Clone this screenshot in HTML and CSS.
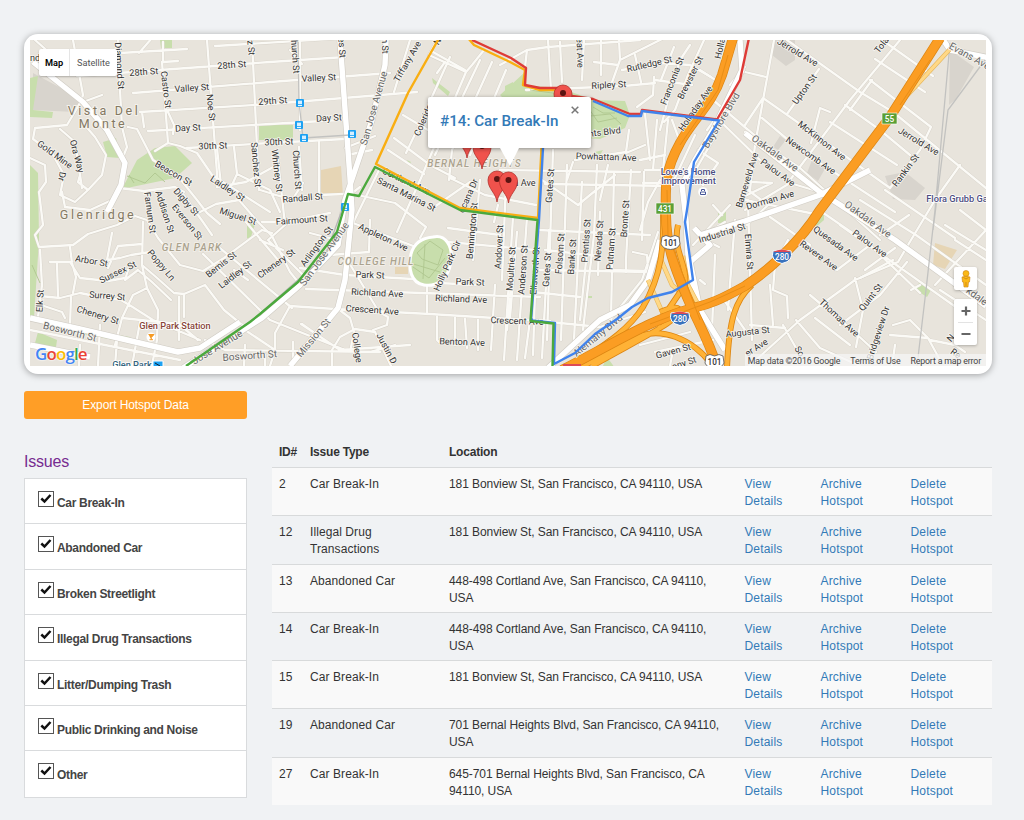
FILE: index.html
```html
<!DOCTYPE html>
<html lang="en">
<head>
<meta charset="utf-8">
<title>Hotspots</title>
<link rel="stylesheet" href="styles.css">
</head>
<body>
<main class="page">
<section class="map-card">
<div class="map">
<svg class="map-art" viewBox="30 40 956 326" width="956" height="326">
<defs>
<g id="pin"><path d="M0 0C-1-9-9-13-9-22A9 9 0 0 1 9-22C9-13 1-9 0 0Z" fill="#f0524c" stroke="#b3302b" stroke-width=".8"/><circle cy="-23" r="3" fill="#5c1412"/></g>
<g id="stop"><rect x="-4" y="-4" width="8" height="8" rx="1" fill="#1da1f2"/><rect x="-2" y="-2.4" width="4" height="3.6" fill="#d8efff"/><path d="M-2 2.6H2" stroke="#fff"/></g>
<g id="streets" fill="none" stroke-linejoin="round" stroke-linecap="round">
<path d="M120 53L187 49M77 76L270 62 345 57M215 46L345 38M133 93L270 82 390 73M140 112L270 104 417 92M148 131L270 124 340 120M187 148L270 143 345 139M207 40L218 187M252 40L259 190M118 40L120 90 122 127 127 147 123 157M162 62L168 143 180 146 197 153 212 175 270 212M168 112L174 125 173 134M168 143L155 151M142 112L144 127M163 42L163 62 178 61M139 53L152 38M128 127L137 129 153 160 177 175 197 200 207 213 220 224"/>
<path d="M73 40L83 95 80 103 67 125 35 128 33 139 52 153 64 175 60 195 75 202 88 190 78 182 80 175M60 129L75 142 82 188M83 102L102 95M82 122L95 137 106 155 102 175 88 190M62 192L65 207 90 210 112 200 119 188 144 191 175 187 184 192M30 158L45 165 46 182 39 192 43 225 35 235 39 247 73 245 88 234 117 225 135 216 147 220 158 238 180 265 203 271 224 258 262 230 272 233"/>
<path d="M35 40L60 62M143 222L142 265 147 288 158 310 158 318M112 233L107 260 120 258 131 255 150 252M142 244L118 246 108 268M128 270L125 280 138 270 152 282 171 300M142 265L156 277 174 293 184 294 184 317 M184 294L205 285 224 310 246 328M147 288L133 295 122 318 115 345M147 288L158 310 157 340 152 365M70 247L72 263 76 277 73 293M50 262L70 262 80 278 108 281 125 278M40 250L42 285 38 317M57 264L58 296M40 296L60 298 80 293 95 296 121 300 131 306 153 320 200 340M71 297L70 325M41 305L62 312 65 318M30 330L180 360M80 345L79 366M100 325L98 366M117 340L115 366M122 318L179 324 198 340M179 297L179 340M140 322L132 366"/>
<path d="M180 190L203 222 212 235M200 212L216 204 239 200 258 222 272 236 290 272 298 282M217 148L221 185M234 147L237 174 270 190 280 212M237 174L232 185M217 187L246 182 275 166M260 190L292 200 303 183M299 147L302 190M319 142L319 195 345 194M277 150L285 225 268 240 302 274M260 240L283 250M203 254L270 320M215 244L292 308M246 222L278 260M234 270L248 280M262 222L285 222 330 213M310 233L337 240"/>
<path d="M300 40L300 130M290 50L302 64M345 148L375 136M347 155L372 150M410 40L394 92M433 52L465 70M445 62L437 73M437 40L429 55 466 72 472 65 484 50M403 115L448 142M394 138L430 165 455 178M388 150L424 174M450 57L417 130 406 153M466 72L421 178 397 232M480 60L435 155M492 62L452 150 449 180M506 70L470 155M360 187L343 200M362 196L395 203 426 227 420 238M470 182L430 210M379 170L353 223 450 260M370 220L369 252 330 255M450 178L485 195 536 205M480 180L473 260M506 182L502 280M498 205L494 222M448 228L500 235M448 242L535 250"/>
<path d="M300 268L345 275 430 280M306 289L540 297M290 306L335 309 430 314 495 318 550 321M351 266L379 312 388 317 387 325 373 330M337 308L350 318 354 332 350 352 370 352 395 345M332 366L332 350 340 337 355 329 375 332 391 366M290 306L275 333 275 350M301 324L340 350 410 345M302 324L316 334 M427 284L427 312M437 317L437 340 440 343M455 318L455 345M465 319L467 348M478 320L478 350M495 285L491 350M511 285L507 330M530 320L525 358M517 232L510 318M450 257L440 283 475 285M270 320L345 350M245 330L275 350 270 366M205 340L225 350 380 352M245 345L244 366M265 355L265 366M293 342L293 366"/>
<path d="M500 65L527 50 548 47 640 40M527 50L525 67M548 40L551 90M560 42L562 82M584 40L582 80M601 40L601 75M594 62L618 65M619 40L620 60 610 88M526 90L624 86 655 83M620 60L670 35M622 70L660 63 690 65 711 77M635 55L641 82M654 77L653 95 637 107M655 80L692 85M674 47L661 80M690 45L680 60 668 100 660 130M704 40L688 75 675 110 664 122M645 114L650 160M668 120L663 170 645 170M657 120L653 170M500 170L640 172 M575 160L626 152 629 130M608 165L600 200M626 153L645 145M545 184L670 186M538 230L650 235M545 250L598 256M540 270L650 272M533 292L580 297M540 321L600 327 645 312"/>
<path d="M553 150L547 340M567 165L561 340M582 182L574 340M597 165L594 235 583 330M614 173L611 320M631 170L626 260M644 172L642 240M660 180L648 202 640 230M513 217L504 360M527 217L517 360M542 180L578 205 590 195 615 175M537 232L533 355M549 230L542 358M633 252L647 255 648 270M658 232L642 280 610 320M589 232L580 320M600 212L598 275M611 270L646 271M626 260L626 272M573 162L567 180M640 160L665 155M643 183L662 183M680 142L672 120M695 135L660 210M698 150L718 163 703 185M730 110L690 180M713 100L760 140M700 70L717 81M719 120L760 160M730 85L745 67M713 122L707 130"/>
<path d="M774 40L763 100 755 145 750 190M745 72L766 77M787 40L860 92 893 112 915 130 986 188M819 69L787 114M745 125L763 98 820 138 890 188M762 118L800 150 895 212M745 132L800 168 880 240M900 40L850 100 820 140 790 180M875 59L925 92M885 42L933 76M872 80L850 110M870 80L931 127 920 150 890 188M845 105L880 130 910 155M830 122L897 165M811 143L820 108 830 112M752 182L772 183 745 196M745 200L820 215M745 210L790 183 830 195M748 190L768 205 747 225M770 217L810 245M840 225L960 310M860 200L916 235 986 285M885 190L955 238M822 212L870 245 920 293M870 245L837 270M907 262L880 295M893 260L860 278M909 215L880 235M895 248L865 270"/>
<path d="M745 370L800 320 855 280 898 262 908 245 935 200 960 165M750 325L785 328M788 240L775 265 773 290 787 296 788 318M770 285L773 325M810 295L852 330 876 352M796 320L820 348 860 366M783 325L800 355M855 278L863 310 856 347M880 295L840 325M815 318L850 345M893 325L910 320 930 340 955 345 965 352M895 345L892 366M890 335L928 338 940 360M940 290L986 320M955 240L986 260M935 285L986 230M945 225L986 250M960 210L986 230M911 290L920 285"/>
<path d="M713 205L722 215M705 240L719 247M715 255L712 330M735 220L728 310M748 200L752 340M700 280L705 284M693 245L730 205M620 340L606 352 586 366M640 345L690 332M655 352L713 340M672 355L670 366M700 330L720 365M724 300L745 330M712 230L725 222"/>
</g>
<g id="arterials" fill="none" stroke-linejoin="round">
<path d="M33 62L83 102 107 130 125 163 121 185 107 212M340 40L350 178 352 210 345 280 338 308 290 366M386 40L385 65 372 120 345 200 338 245 300 285 262 318 183 368M30 318L80 329 178 352 200 348 240 322M345 210L350 195M30 345L90 357"/>
<path d="M740 40L742 70 713 130 695 160 682 185 686 220 690 290M548 368L600 320 630 305 648 280 660 240M745 133L820 192 895 240 986 306M700 235L745 221 820 195 870 170M694 228L710 245 690 262 700 310 725 350M990 58L950 50 942 38"/>
</g>
<clipPath id="frame"><rect x="30" y="40" width="956" height="326"/></clipPath>
</defs>
<g clip-path="url(#frame)">
<rect x="30" y="40" width="956" height="326" fill="#e8e4dc"/>
<path d="M33 73L83 100 75 112 33 110ZM885 176L905 172 925 188 915 200 893 199ZM950 50L974 67 956 99 949 105ZM780 136L786 140 778 150 773 147ZM812 160L826 167 818 181 807 173ZM775 40H795V60L786 66 772 55Z" fill="#d8d4cd"/>
<g fill="#c8deac"><path d="M30 78L38 76 33 110 53 112 52 118 30 117ZM30 165L38 173 39 240 34 318H30ZM103 142L116 138 120 158 107 157ZM137 160L155 148 175 146 192 163 175 178 122 189ZM160 40H172V48H161ZM259 125H293V140H259ZM38 332L57 340 55 354 35 343ZM67 326L130 337 134 344 68 331ZM525 72L523 85 560 88 594 100 625 101 630 115 625 128 600 139 540 135 500 95ZM432 78L450 92 448 96 433 83ZM505 86L513 82V104H505ZM718 212H726V223H718ZM817 220L824 213V220L816 227ZM919 283L931 290 927 297 916 290ZM585 296H592V298H585ZM607 357L615 368H602ZM595 152L603 150 600 155ZM247 222L255 224 250 240 247 238ZM230 330L240 322 240 326ZM407 160L411 162 409 165Z"/></g>
<path d="M321 170L341 166 343 196H321ZM395 267H408V274H395ZM935 243L957 250 945 269 933 265Z" fill="#e6d5b5"/>
<use href="#streets" stroke="#d6d1c8" stroke-width="3.1"/><use href="#streets" stroke="#fbfaf6" stroke-width="2.3"/>
<use href="#arterials" stroke="#d0ccc4" stroke-width="6.6"/><use href="#arterials" stroke="#fff" stroke-width="5.4"/>
<path d="M433 237C445 234 453 245 451 262 448 280 436 287 424 285 411 283 408 269 411 254 414 243 421 238 433 237Z" fill="#c8deac" stroke="#fff" stroke-width="3"/>
<path d="M417 253L430 241 443 250 438 265 422 259ZM413 267L429 278 445 258M425 244L423 279M410 263L440 272M127 176L145 183 155 173 165 182M134 183L129 175M590 116L610 114 621 124M593 107L603 113 615 113M585 103L598 122 617 118M32 265L40 283M530 90L560 94 575 105" fill="none" stroke="#afc68f" stroke-width=".9"/>
<g fill="none" stroke="#c2c2c0" stroke-width="1.300"><path d="M298 40L299 102 303 138 350 135M950 43L935 210 926 290 917 366M985 60L948 110 933 230"/><path d="M342 210L325 256 255 318 190 362" stroke="#b5b5b5"/></g>
<g fill="none" stroke-linejoin="round">
<path d="M951 48L903 100M661 260L672 285 690 300M683 256L688 285 697 302M648 280L668 325" stroke="#e5b65e" stroke-width="4.5"/><path d="M951 48L903 100M661 260L672 285 690 300M683 256L688 285 697 302M648 280L668 325" stroke="#ffd886" stroke-width="3.3"/>
<g stroke="#dd8613" stroke-width="6"><path id="ramps" d="M663 213C664 245 662 275 643 307 625 335 595 350 573 366M578 368C600 360 625 340 643 335 660 330 690 335 713 366M592 366C620 350 640 340 660 328S690 300 660 312M678 225C672 250 688 265 685 285L657 326M752 285C735 300 729 320 727 368"/></g>
<use href="#ramps" stroke="#ffb236" stroke-width="4.3"/>
<path d="M733 38L722 75C712 105 692 120 680 143 665 170 665 185 666 215 666 250 678 275 687 297 698 323 709 340 718 370M940 38L890 117 820 210C797 247 762 275 745 286 720 300 710 304 693 308 650 320 620 340 562 370" stroke="#dd8613" stroke-width="10"/>
<path d="M733 38L722 75C712 105 692 120 680 143 665 170 665 185 666 215 666 250 678 275 687 297 698 323 709 340 718 370M940 38L890 117 820 210C797 247 762 275 745 286 720 300 710 304 693 308 650 320 620 340 562 370" stroke="#fb9d23" stroke-width="8.6"/>
<path d="M728 55L718 90 680 145M667 190L668 235 700 320M930 60L900 105M745 286L710 302 650 324" stroke="#e88e16"/>
</g>
<g class="street">
<text transform="translate(35 61)">nd</text><text transform="translate(116.500 66)rotate(86)">Diamond St</text><text transform="translate(144 75)rotate(-4)">28th St</text><text transform="translate(232 68)rotate(-4)">28th St</text><text transform="translate(163 90)rotate(83)">Castro St</text><text transform="translate(192 91)rotate(-4)">Valley St</text><text transform="translate(208 108)rotate(84)">Noe St</text><text transform="translate(188 131)rotate(-3)">Day St</text><text transform="translate(213 149)rotate(-2)">30th St</text><text transform="translate(253 165)rotate(85)">Sanchez St</text><text transform="translate(248 48)rotate(85)">z St</text><text transform="translate(226 191)rotate(33)">Laidley St</text><text transform="translate(172 176)rotate(30)">Beacon St</text><text transform="translate(53 157)rotate(36)">Gold Mine</text><text transform="translate(59 176)rotate(100)">Dr</text><text transform="translate(74 157)rotate(75)">Ora Way</text><text transform="translate(147 213)rotate(82)">Farnum St</text><text transform="translate(162 213)rotate(72)">Addison St</text><text transform="translate(184 204)rotate(49)">Digby St</text><text transform="translate(185 224)rotate(51)">Everson St</text><text transform="translate(237 219)rotate(18)">Miguel St</text><text transform="translate(91 264)rotate(10)">Arbor St</text><text transform="translate(119 275)rotate(-26)">Sussex St</text><text transform="translate(159 267)rotate(50)">Poppy Ln</text><text transform="translate(107 299)rotate(5)">Surrey St</text><text transform="translate(97 318)rotate(17)">Chenery St</text><text transform="translate(43 301)rotate(-87)">Elk St</text><text transform="translate(223 267)rotate(-38)">Bemis St</text><text transform="translate(237 277)rotate(-38)">Laidley St</text><text transform="translate(278 266)rotate(-36)">Chenery St</text>
<text transform="translate(292 54)rotate(86)">Church St</text><text transform="translate(339 48)rotate(86)">es St</text><text transform="translate(382 46)rotate(88)">n St</text><text transform="translate(319 81)rotate(-3)">Valley St</text><text transform="translate(273 104)rotate(-4)">29th St</text><text transform="translate(329 121)rotate(-3)">Day St</text><text transform="translate(279 145)rotate(-2)">30th St</text><text transform="translate(274 171)rotate(83)">Whitney St</text><text transform="translate(294 170)rotate(86)">Church St</text><text transform="translate(303 201)rotate(-5)">Randall St</text><text transform="translate(302 223)rotate(-4)">Fairmount St</text><text transform="translate(319 248)rotate(-53)">Arlington St</text><text transform="translate(410 63)rotate(-60)">Tiffany Ave</text><text transform="translate(427 119)rotate(-67)">Coleridge</text><text transform="translate(405 197)rotate(27)">Santa Marina St</text><text transform="translate(405 184)rotate(25)">Cortland Ave</text><text transform="translate(382 240)rotate(25)">Appleton Ave</text><text transform="translate(370 278)rotate(2)">Park St</text><text transform="translate(470 285)rotate(2)">Park St</text><text transform="translate(377 296)rotate(3)">Richland Ave</text><text transform="translate(461 302)rotate(2)">Richland Ave</text><text transform="translate(372 313)rotate(4)">Crescent Ave</text><text transform="translate(517 324)rotate(2)">Crescent Ave</text><text transform="translate(462 345)rotate(2)">Benton Ave</text><text transform="translate(354 348)rotate(82)">College</text><text transform="translate(384 350)rotate(62)">Justin D</text><text transform="translate(450 267)rotate(-66)">Holly Park Cir</text><text transform="translate(475 231)rotate(-85)">Bennington St</text><text transform="translate(471 197)rotate(-66)">ocana Dr</text><text transform="translate(440 43)rotate(-60)">N</text>
<text transform="translate(502 247)rotate(-87)">Andover St</text><text transform="translate(514 269)rotate(-86)">Moultrie St</text><text transform="translate(526 270)rotate(-86)">Anderson St</text><text transform="translate(538 271)rotate(-86)">Ellsworth St</text><text transform="translate(550 270)rotate(-86)">Gates St</text><text transform="translate(563 254)rotate(-86)">Folsom St</text><text transform="translate(575 257)rotate(-86)">Banks St</text><text transform="translate(589 241)rotate(-86)">Prentiss St</text><text transform="translate(602 241)rotate(-86)">Nevada St</text><text transform="translate(614 249)rotate(-86)">Putnam St</text><text transform="translate(628 219)rotate(-86)">Bronte St</text><text transform="translate(553 186)rotate(-86)">Gates St</text><text transform="translate(629 207)rotate(-86)"></text><text transform="translate(522 186)">na Ave</text><text transform="translate(577 53)rotate(88)">eat Ave</text><text transform="translate(650 67)rotate(-13)">Rutledge St</text><text transform="translate(609 88)rotate(-3)">Ripley St</text><text transform="translate(675 82)rotate(-69)">Franconia St</text><text transform="translate(693 79)rotate(-64)">Brewster St</text><text transform="translate(723 49)rotate(-78)">Holla</text><text transform="translate(698 110)rotate(-55)">Holladay Ave</text><text transform="translate(605 135)rotate(-7)">nts Blvd</text><text transform="translate(606 160)rotate(2)">Powhattan Ave</text><text transform="translate(750 181)rotate(-73)">Barneveld Ave</text><text transform="translate(723 236)rotate(-17)">Industrial St</text><text transform="translate(746 252)rotate(86)">Elmira St</text><text transform="translate(674 354)rotate(-15)">Gaven St</text><text transform="translate(685 366)rotate(-18)">ony St</text><text transform="translate(748 335)rotate(-6)">Augusta St</text>
<text transform="translate(796 55)rotate(31)">Jerrold Ave</text><text transform="translate(807 91)rotate(-54)">Upton St</text><text transform="translate(884 47)rotate(-52)">Tola</text><text transform="translate(820 143)rotate(38)">McKinnon Ave</text><text transform="translate(809 158)rotate(35)">Newcomb Ave</text><text transform="translate(776 175)rotate(36)">Palou Ave</text><text transform="translate(771 203)rotate(-16)">Dorman Ave</text><text transform="translate(917 144)rotate(31)">Jerrold Ave</text><text transform="translate(908 172)rotate(-53)">Rankin St</text><text transform="translate(834 246)rotate(36)">Quesada Ave</text><text transform="translate(817 258)rotate(36)">Revere Ave</text><text transform="translate(868 246)rotate(36)">Palou Ave</text><text transform="translate(837 320)rotate(43)">Thomas Ave</text><text transform="translate(873 299)rotate(-52)">Quint St</text><text transform="translate(881 334)rotate(-72)">Bridgeview Dr</text><text transform="translate(758 350)rotate(-32)">er Ave</text><text transform="translate(797 353)rotate(60)">So</text><text transform="translate(953 340)rotate(-50)">N</text><text transform="translate(954 356)rotate(35)">Re</text>
</g>
<g class="street road">
<text transform="translate(377 109)rotate(-74)">San Jose Avenue</text><text transform="translate(327 256)rotate(-54)">San Jose Avenue</text><text transform="translate(219 350)rotate(-31)">Jose Avenue</text><text transform="translate(69 335)rotate(14)">Bosworth St</text><text transform="translate(250 359)rotate(-4)">Bosworth St</text><text transform="translate(316 340)rotate(-50)">Mission St</text><text transform="translate(724 122)rotate(-59)">Bayshore Blvd</text><text transform="translate(600 338)rotate(-39)">Alemany Blvd</text><text transform="translate(773 156)rotate(36)">Oakdale Ave</text><text transform="translate(866 222)rotate(36)">Oakdale Ave</text><text transform="translate(968 59)rotate(29)">Evans Ave</text><text transform="translate(975 299)rotate(36)">kdale</text>
</g>
<g class="area"><text x="104" y="115">Vista Del</text><text x="103" y="128">Monte</text><text x="98" y="219">Glenridge</text></g>
<g class="district"><text x="192" y="251">GLEN PARK</text><text x="376" y="265">COLLEGE HILL</text><text x="474.500" y="167">BERNAL HEIGHTS</text></g>
<text class="poi brown" x="175" y="329">Glen Park Station</text><circle cx="151" cy="337" r="4.500" fill="#fff"/><path d="M148.500 334.500H154L151.300 337.500V339.500M149.500 339.700H153" stroke="#f59a23" fill="#f59a23"/>
<text class="poi" x="132" y="368">Glen Park</text><path d="M153 361H163V368H153Z" fill="#1da1f2" stroke="#fff"/><path d="M155 363L160 366" stroke="#123"/>
<text class="poi purple" x="688" y="174.500">Lowe's Home</text><text class="poi purple" x="688.500" y="184">Improvement</text><circle cx="703" cy="192" r="4.800" fill="#fff"/><path d="M700.500 192V194.500H705.500V192ZM701.500 191V189.500H704.500V191" fill="none" stroke="#475798"/>
<text class="poi purple" x="957" y="202">Flora Grubb Ga</text>
<use href="#stop" x="300" y="103"/><use href="#stop" x="299" y="125"/><use href="#stop" x="304" y="138"/><use href="#stop" x="352" y="134"/><use href="#stop" x="345" y="207"/>
<g><path d="M656 203H674V214H656ZM882 113H897V124H882Z" fill="#5b9f35" stroke="#fff" stroke-width=".6"/><text class="shield light" x="665" y="211.500">431</text><text class="shield light" x="889.500" y="121.500">55</text>
<path id="us" d="M662 237L666 235.500 670.500 237 675 235.500 679 237 680 244Q678 249 670.500 249.500 663 249 661 244Z" fill="#fff" stroke="#555" stroke-width=".8"/><use href="#us" x="44" y="119"/><text class="shield" x="670.500" y="246">101</text><text class="shield" x="714.500" y="365">101</text>
<path id="inter" d="M671 313Q680 311 689 313 692 323 680 325.500 668 323 671 313Z" fill="#3972bd" stroke="#fff"/><path id="intertop" d="M671 314Q680 309 689 314Z" fill="#dd4a55"/><use href="#inter" x="102" y="-62"/><use href="#intertop" x="102" y="-62"/><text class="shield light" x="680" y="321.500">280</text><text class="shield light" x="782" y="259.500">280</text><path d="M563 364H581V368H563Z" fill="#dd4a55"/></g>
<g fill="none" stroke-width="2.400" stroke-linejoin="round">
<path d="M438 40L408 93 376 164 460 208 538 218 541.500 148M468 38L474 45 510 62 525 70 523 85 540 90 560 90" stroke="#f9ae12"/>
<path d="M472 40L511 58 526 68 525 85 540 88 562 88M572 96L593 99 630 114 641 114 642 110 717 119.500 740 80 749 38" stroke="#de3b37"/>
<path d="M593 101L628 116 641 116 642 111 719 120.500 694 162 687 210 685 222 693 280 672 292 648 298 632 307 617 319 595 334 575 353 554 364 555 323 531 320.500 539 220 543 148" stroke="#4083ec"/>
<path d="M186 366L250 322 260 314 298 282 337 232 348 194 359 196 375 167 460 210 537.500 220 530.500 321 553.500 323.500 552.500 366" stroke="#4ba93d"/>
</g>
<use href="#pin" x="563" y="116"/><use href="#pin" x="467" y="158"/><use href="#pin" x="482" y="169"/><use href="#pin" x="497" y="202"/><use href="#pin" x="508.500" y="203"/>
</g>
</svg>
<div class="map-type"><button class="type-on">Map</button><button>Satellite</button></div>
<div class="info"><span class="info-title">#14: Car Break-In</span><svg class="info-close" viewBox="0 0 8 8"><path d="M.7.7L7.300 7.300M7.300.7L.7 7.300" stroke="#777" stroke-width="1.500"/></svg><svg class="info-tail" viewBox="0 0 20 19"><path d="M0 0L10 18 19 0Z" fill="#fff"/></svg></div>
<div class="google"><span class="g-blue">G</span><span class="g-red">o</span><span class="g-yellow">o</span><span class="g-blue">g</span><span class="g-green">l</span><span class="g-red">e</span></div>
<div class="pegman"><svg viewBox="0 0 12 18" width="12" height="18"><circle cx="6" cy="3.500" r="3" fill="#fbb917" stroke="#cb7f13" stroke-width=".6"/><path d="M2 7Q6 5.500 10 7L9.500 12H8.500L8 17H4L3.500 12H2.500Z" fill="#fbb917" stroke="#cb7f13" stroke-width=".6"/><path d="M6 12V16M3.500 7.500L6 9 8.500 7.500" stroke="#c47a12" fill="none" stroke-width=".7"/></svg></div>
<div class="zoom"><svg viewBox="0 0 23 46" width="23" height="46"><path d="M7.500 12H16.500M12 7.500V16.500M7.500 35H16.500" stroke="#666" stroke-width="2.200"/><path d="M4 23.500H19" stroke="#e3e3e3"/></svg></div>
<div class="credits"><span>Map data ©2016 Google</span><span>Terms of Use</span><span>Report a map error</span></div>
</div>
</section>
<div class="content">
<aside class="sidebar">
<button class="export">Export Hotspot Data</button>
<h2 class="heading">Issues</h2>
<svg class="symbols" width="0" height="0"><defs><g id="check"><rect x=".5" y=".5" width="15" height="15" fill="#fff" stroke="#555"/><path d="M3.300 7.500L6.500 10.500 12.500 4" fill="none" stroke="#111" stroke-width="2.500"/></g></defs></svg>
<ul class="issues">
<li><svg class="box"><use href="#check"/></svg><span>Car Break-In</span></li>
<li><svg class="box"><use href="#check"/></svg><span>Abandoned Car</span></li>
<li><svg class="box"><use href="#check"/></svg><span>Broken Streetlight</span></li>
<li><svg class="box"><use href="#check"/></svg><span>Illegal Drug Transactions</span></li>
<li><svg class="box"><use href="#check"/></svg><span>Litter/Dumping Trash</span></li>
<li><svg class="box"><use href="#check"/></svg><span>Public Drinking and Noise</span></li>
<li><svg class="box"><use href="#check"/></svg><span>Other</span></li>
</ul>
</aside>
<div class="table">
<div class="row head"><span>ID#</span><span>Issue Type</span><span>Location</span></div>
<div class="row"><span>2</span><span class="type">Car Break-In</span><span class="place">181 Bonview St, San Francisco, CA 94110, USA</span><a>View<br>Details</a><a>Archive<br>Hotspot</a><a>Delete<br>Hotspot</a></div>
<div class="row"><span>12</span><span class="type">Illegal Drug<br>Transactions</span><span class="place">181 Bonview St, San Francisco, CA 94110, USA</span><a>View<br>Details</a><a>Archive<br>Hotspot</a><a>Delete<br>Hotspot</a></div>
<div class="row"><span>13</span><span class="type">Abandoned Car</span><span class="place">448-498 Cortland Ave, San Francisco, CA 94110,<br>USA</span><a>View<br>Details</a><a>Archive<br>Hotspot</a><a>Delete<br>Hotspot</a></div>
<div class="row"><span>14</span><span class="type">Car Break-In</span><span class="place">448-498 Cortland Ave, San Francisco, CA 94110,<br>USA</span><a>View<br>Details</a><a>Archive<br>Hotspot</a><a>Delete<br>Hotspot</a></div>
<div class="row"><span>15</span><span class="type">Car Break-In</span><span class="place">181 Bonview St, San Francisco, CA 94110, USA</span><a>View<br>Details</a><a>Archive<br>Hotspot</a><a>Delete<br>Hotspot</a></div>
<div class="row"><span>19</span><span class="type">Abandoned Car</span><span class="place">701 Bernal Heights Blvd, San Francisco, CA 94110,<br>USA</span><a>View<br>Details</a><a>Archive<br>Hotspot</a><a>Delete<br>Hotspot</a></div>
<div class="row"><span>27</span><span class="type">Car Break-In</span><span class="place">645-701 Bernal Heights Blvd, San Francisco, CA<br>94110, USA</span><a>View<br>Details</a><a>Archive<br>Hotspot</a><a>Delete<br>Hotspot</a></div>
</div>
</div>
</main>
</body>
</html>
```
FILE: styles.css
```css
* { box-sizing: border-box; }
body { margin: 0; background: #f0f2f4; color: #333; font: 12px/17px "Liberation Sans", Arial, sans-serif; }
button { border: 0; margin: 0; font: inherit; }
.page { height: 820px; padding: 34px 32px 0 24px; overflow: hidden; }
.map-card { width: 968px; height: 340px; padding: 6px; background: #fff; border-radius: 14px; box-shadow: 0 1px 7px rgba(0,0,0,.35); }
.map { position: relative; width: 956px; height: 326px; overflow: hidden; font-family: Roboto, sans-serif; }
.map-art { display: block; }
.street { font-size: 9.1px; fill: #333; text-anchor: middle; stroke: #f7f5f0; stroke-width: 1.6px; paint-order: stroke; }
.road { font-size: 10px; fill: #666; }
.area { font-size: 12.5px; letter-spacing: 2.6px; fill: #837862; text-anchor: middle; stroke: #f4f1eb; stroke-width: 2px; paint-order: stroke; }
.district { font-size: 10px; font-style: italic; font-weight: 500; letter-spacing: 1.1px; fill: #aaa28e; text-anchor: middle; stroke: #f4f1eb; stroke-width: 1.5px; paint-order: stroke; }
.poi { font-size: 9.2px; font-weight: 500; text-anchor: middle; fill: #356580; stroke: #fff; stroke-width: 1.5px; paint-order: stroke; }
.brown { fill: #884437; }
.purple { fill: #4c4c80; }
.shield { font-size: 8.2px; font-weight: 500; text-anchor: middle; fill: #333; }
.shield.light { fill: #fff; }
.map-type { position: absolute; left: 9px; top: 9px; display: flex; height: 27px; background: #fff; border-radius: 2px; box-shadow: 0 1px 2px rgba(0,0,0,.25); font-size: 9.2px; }
.map-type button { width: 47px; padding: 0; background: transparent; color: #565656; }
.map-type .type-on { width: 31px; border-right: 1px solid #e5e5e5; color: #000; font-weight: 600; }
.info { position: absolute; left: 398px; top: 57px; width: 163px; height: 51px; padding: 16px 12px; background: #fff; border-radius: 2px; box-shadow: 0 1px 4px rgba(0,0,0,.4); }
.info-title { font-size: 15.2px; font-weight: 500; color: #337ab7; white-space: nowrap; }
.info-close { position: absolute; right: 12px; top: 9px; width: 8px; height: 8px; }
.info-tail { position: absolute; left: 72px; top: 51px; width: 20px; height: 19px; }
.google { position: absolute; left: 5px; top: 302px; font: 600 17px/24px "Open Sans", sans-serif; letter-spacing: -.9px; text-shadow: 0 0 2px #fff, 0 0 2px #fff; }
.g-blue { color: #4285f4; }
.g-red { color: #ea4335; }
.g-yellow { color: #fbbc05; }
.g-green { color: #34a853; }
.pegman, .zoom { position: absolute; left: 924px; width: 23px; background: #fff; border-radius: 2px; box-shadow: 0 1px 3px rgba(0,0,0,.25); }
.pegman { top: 227px; height: 23px; display: grid; place-items: center; }
.zoom { top: 259px; height: 46px; }
.credits { position: absolute; right: 0; bottom: 0; display: flex; gap: 10px; height: 12px; padding: 0 5px 0 3px; background: rgba(245,245,245,.75); color: #444; font-size: 8.8px; letter-spacing: -.16px; line-height: 14px; white-space: nowrap; }
.content { display: flex; gap: 25px; margin-top: 17px; }
.sidebar { width: 223px; }
.export { display: block; width: 223px; height: 28px; border-radius: 3px; background: #ff9e26; color: #fff; letter-spacing: -.08px; }
.heading { margin: 33px 0 7px; color: #762b90; font-size: 16px; font-weight: 400; line-height: 19px; letter-spacing: -.2px; }
.symbols { position: absolute; }
.issues { margin: 0; padding: 0; list-style: none; background: #fff; border: 1px solid #d9dbdd; }
.issues li { display: flex; gap: 3px; height: 45.4px; padding: 12px 13px; border-bottom: 1px solid #d9dbdd; color: #444; font-weight: 700; letter-spacing: -.32px; }
.issues li:last-child { border-bottom: 0; }
.issues span { padding-top: 4px; }
.box { width: 16px; height: 16px; }
.table { width: 720px; padding-top: 44px; }
.row { display: grid; grid-template-columns: 31px 139px 295.500px 76px 90px 82px; height: 48.300px; padding: 8px 0 0 7px; border-top: 1px solid #d8dadb; white-space: nowrap; }
.row:nth-child(even) { background: #f9f9f9; }
.row.head { height: 32px; padding-top: 9px; border: 0; font-weight: 700; letter-spacing: -.22px; }
.type { letter-spacing: .08px; }
.place { letter-spacing: -.08px; }
.row a { color: #337ab7; letter-spacing: .18px; }
```
